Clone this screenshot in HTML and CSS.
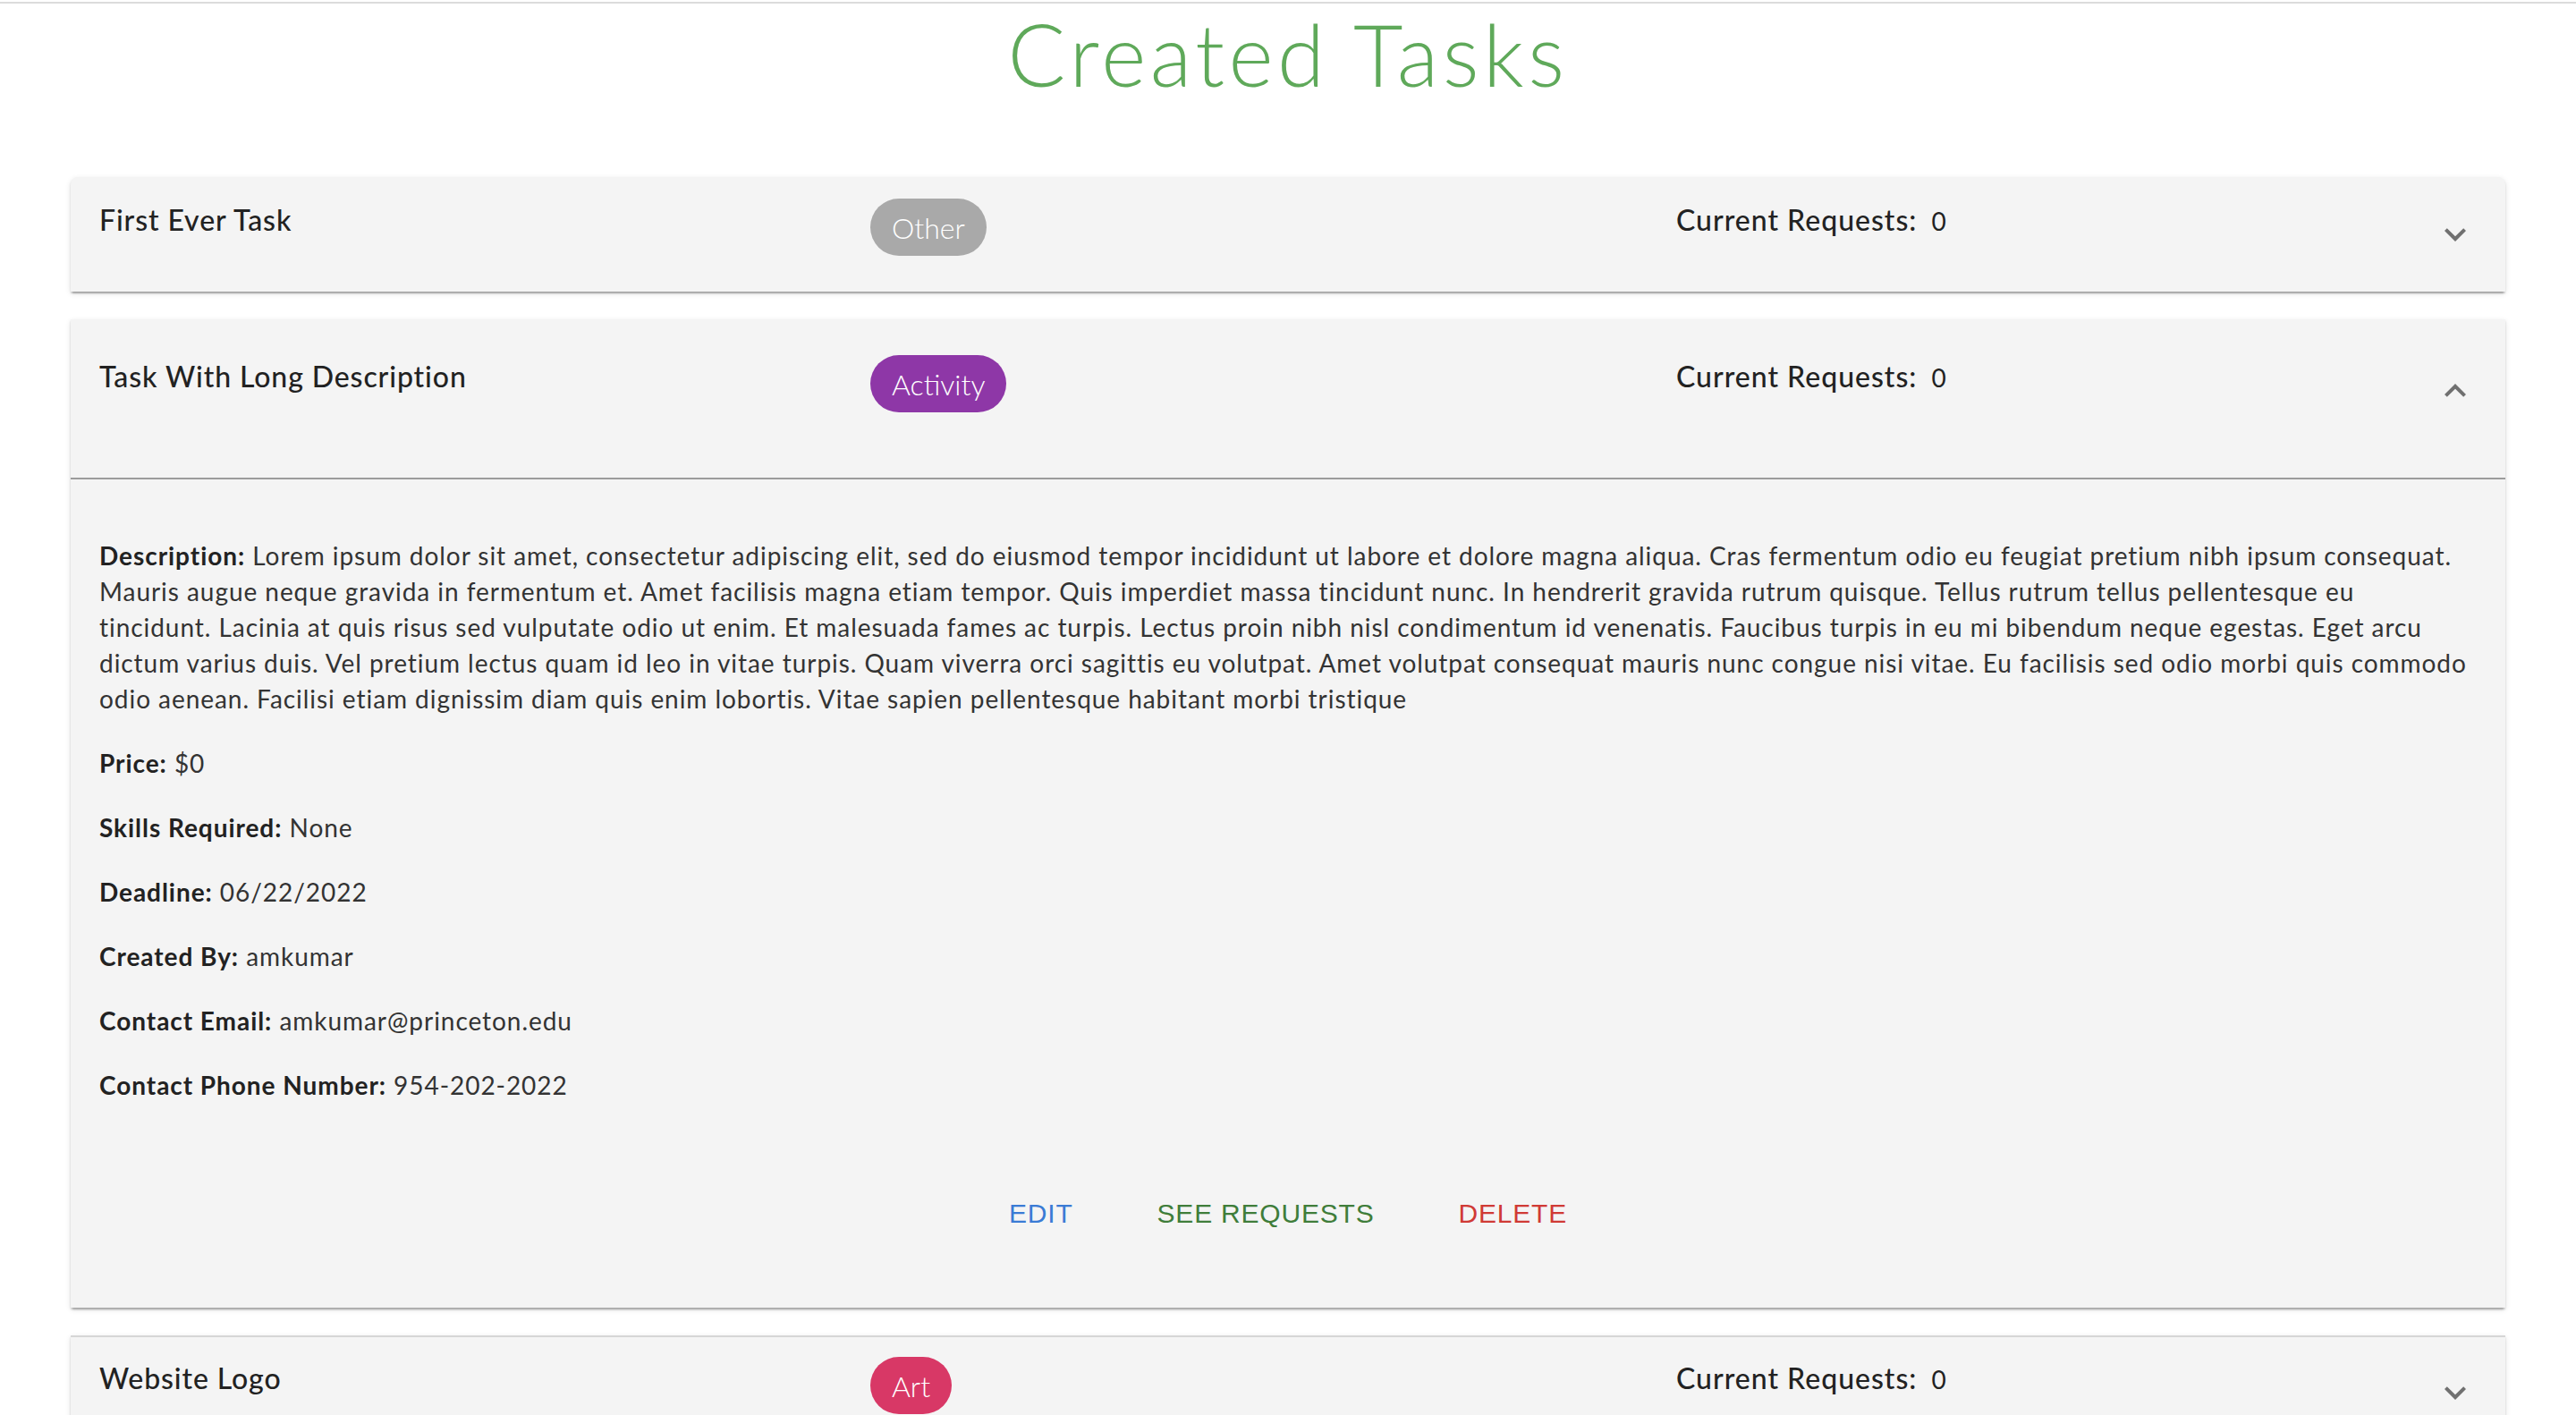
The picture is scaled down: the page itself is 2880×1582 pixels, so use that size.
FILE: index.html
```html
<!DOCTYPE html>
<html lang="en">
<head>
<meta charset="utf-8">
<title>Created Tasks</title>
<link rel="stylesheet" href="styles.css">
</head>
<body>
<div class="topline"></div>
<h1 class="page-title">Created Tasks</h1>
<main class="task-list">
  <section class="card card-first">
    <div class="summary">
      <div class="summary-grid">
        <div class="task-name">First Ever Task</div>
        <div><span class="chip chip-other">Other</span></div>
        <div class="requests"><span class="req-label">Current Requests:</span><span class="req-count">0</span></div>
      </div>
      <div class="expand-icon">
        <svg viewBox="0 0 24 24" width="48" height="48"><path d="M16.59 8.59 12 13.17 7.41 8.59 6 10l6 6 6-6z"/></svg>
      </div>
    </div>
  </section>

  <section class="card card-expanded">
    <div class="summary">
      <div class="summary-grid">
        <div class="task-name">Task With Long Description</div>
        <div><span class="chip chip-activity">Activity</span></div>
        <div class="requests"><span class="req-label">Current Requests:</span><span class="req-count">0</span></div>
      </div>
      <div class="expand-icon open">
        <svg viewBox="0 0 24 24" width="48" height="48"><path d="M16.59 8.59 12 13.17 7.41 8.59 6 10l6 6 6-6z"/></svg>
      </div>
    </div>
    <div class="divider"></div>
    <div class="details">
      <p><b>Description:</b> Lorem ipsum dolor sit amet, consectetur adipiscing elit, sed do eiusmod tempor incididunt ut labore et dolore magna aliqua. Cras fermentum odio eu feugiat pretium nibh ipsum consequat. Mauris augue neque gravida in fermentum et. Amet facilisis magna etiam tempor. Quis imperdiet massa tincidunt nunc. In hendrerit gravida rutrum quisque. Tellus rutrum tellus pellentesque eu tincidunt. Lacinia at quis risus sed vulputate odio ut enim. Et malesuada fames ac turpis. Lectus proin nibh nisl condimentum id venenatis. Faucibus turpis in eu mi bibendum neque egestas. Eget arcu dictum varius duis. Vel pretium lectus quam id leo in vitae turpis. Quam viverra orci sagittis eu volutpat. Amet volutpat consequat mauris nunc congue nisi vitae. Eu facilisis sed odio morbi quis commodo odio aenean. Facilisi etiam dignissim diam quis enim lobortis. Vitae sapien pellentesque habitant morbi tristique</p>
      <p><b>Price:</b> $0</p>
      <p><b>Skills Required:</b> None</p>
      <p><b>Deadline:</b> 06/22/2022</p>
      <p><b>Created By:</b> amkumar</p>
      <p><b>Contact Email:</b> amkumar@princeton.edu</p>
      <p><b>Contact Phone Number:</b> 954-202-2022</p>
      <div class="actions">
        <button class="btn btn-edit">Edit</button>
        <button class="btn btn-requests">See Requests</button>
        <button class="btn btn-delete">Delete</button>
      </div>
    </div>
  </section>

  <section class="card card-sep">
    <div class="summary">
      <div class="summary-grid">
        <div class="task-name">Website Logo</div>
        <div><span class="chip chip-art">Art</span></div>
        <div class="requests"><span class="req-label">Current Requests:</span><span class="req-count">0</span></div>
      </div>
      <div class="expand-icon">
        <svg viewBox="0 0 24 24" width="48" height="48"><path d="M16.59 8.59 12 13.17 7.41 8.59 6 10l6 6 6-6z"/></svg>
      </div>
    </div>
  </section>
</main>
</body>
</html>
```

FILE: styles.css
```css
html, body {
  margin: 0;
  padding: 0;
  background: #ffffff;
}

body {
  font-family: Lato, "Open Sans", sans-serif;
  color: #222222;
}

.topline {
  margin-top: 2px;
  height: 2px;
  background: #dcdcdc;
}

.page-title {
  margin: 8px 0 90px;
  font-size: 96px;
  line-height: 96px;
  font-weight: 300;
  letter-spacing: 4.5px;
  color: #5fa95a;
  text-align: center;
}

.task-list {
  margin: 0 79px;
  display: flex;
  flex-direction: column;
  gap: 31px;
}

.card {
  background: #f4f4f4;
  box-shadow: 0 4px 2px -2px rgba(0, 0, 0, 0.2), 0 2px 2px 0 rgba(0, 0, 0, 0.14), 0 2px 6px 0 rgba(0, 0, 0, 0.12);
}

.card-first {
  border-radius: 8px 8px 0 0;
}

.card-sep {
  box-shadow: inset 0 2px 0 rgba(0, 0, 0, 0.12), 0 4px 2px -2px rgba(0, 0, 0, 0.2), 0 2px 2px 0 rgba(0, 0, 0, 0.14), 0 2px 6px 0 rgba(0, 0, 0, 0.12);
}

.summary {
  display: flex;
  align-items: center;
  padding: 24px 32px;
}

.card-expanded .summary {
  padding: 40px 32px;
}

.summary-grid {
  flex: 1;
  height: 80px;
  display: grid;
  grid-template-columns: 862px 901px 1fr;
  align-items: start;
}

.task-name {
  font-size: 32px;
  line-height: 48px;
  font-weight: 500;
  letter-spacing: 0.9px;
  color: #222222;
}

.chip {
  display: inline-flex;
  align-items: center;
  height: 64px;
  padding: 0 24px;
  border-radius: 32px;
  color: #ffffff;
  font-size: 32px;
  font-weight: 300;
}

.chip-other { background: #a9a9a9; }
.chip-activity { background: #8e37a7; }
.chip-art { background: #d83866; }

.requests {
  font-size: 32px;
  line-height: 48px;
  letter-spacing: 1px;
  color: #222222;
}

.req-label {
  font-weight: 500;
}

.req-count {
  margin-left: 16px;
  font-size: 28px;
  font-weight: 400;
}

.expand-icon {
  width: 48px;
  height: 48px;
  display: flex;
}

.expand-icon svg {
  fill: #707070;
}

.expand-icon.open svg {
  transform: rotate(180deg);
}

.divider {
  margin-top: 17px;
  height: 2px;
  background: #9c9c9c;
}

.details {
  display: flex;
  flex-direction: column;
  padding: 65px 32px 72px;
}

.details p {
  margin: 0 8px 32px 0;
  font-size: 28px;
  line-height: 40px;
  letter-spacing: 0.95px;
  color: #333333;
}

.details p b {
  font-weight: 700;
  color: #222222;
}

.actions {
  display: flex;
  justify-content: center;
  gap: 62px;
  margin-top: 59px;
}

.btn {
  border: none;
  background: transparent;
  padding: 12px 16px;
  font-family: "Liberation Sans", Arial, sans-serif;
  font-size: 30px;
  line-height: 42px;
  font-weight: 400;
  letter-spacing: 0.8px;
  text-transform: uppercase;
}

.btn-edit { color: #3a7bd5; }
.btn-requests { color: #3f7d3a; }
.btn-delete { color: #d03a35; }
```
